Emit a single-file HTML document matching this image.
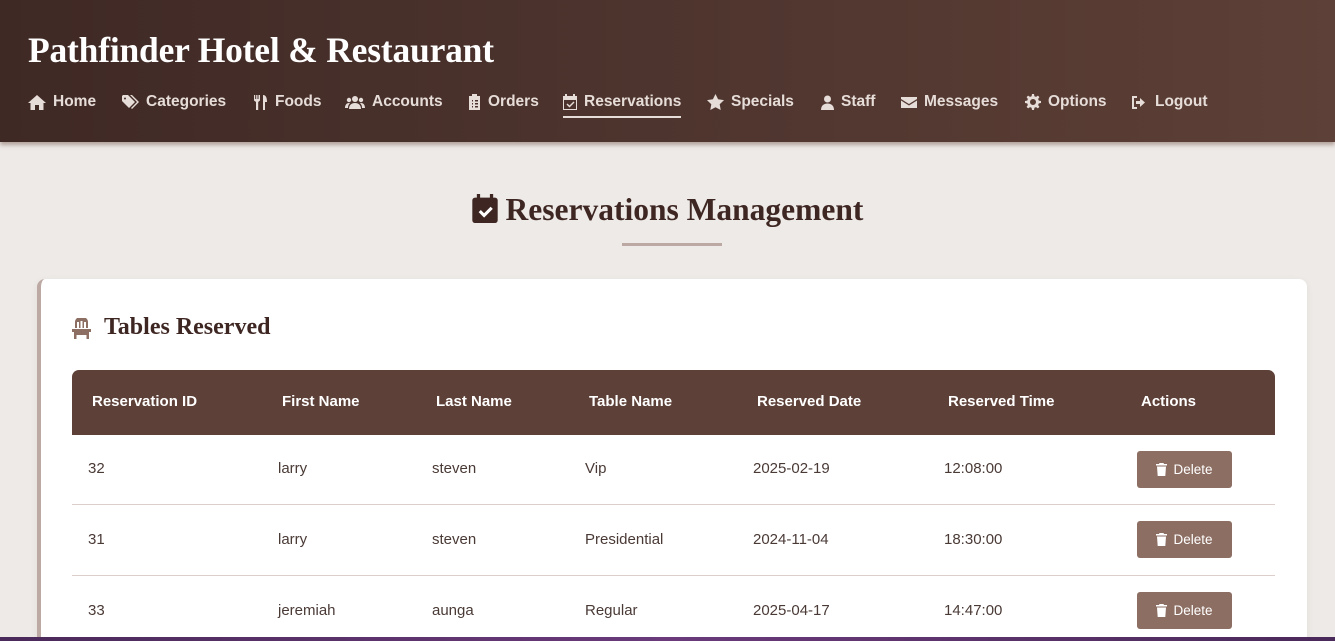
<!DOCTYPE html>
<html><head><meta charset="utf-8"><style>
*{margin:0;padding:0;box-sizing:border-box}
html,body{width:1335px;height:641px;overflow:hidden}
body{background:#eeeae7;font-family:"Liberation Sans",sans-serif;position:relative}
.hdr{position:absolute;left:0;top:0;width:1335px;height:142px;background:linear-gradient(90deg,#3f2925,#5d4037);box-shadow:0 3px 4px rgba(120,90,80,.5)}
.hdr h1{position:absolute;left:28px;top:29px;font-family:"Liberation Serif",serif;font-size:35.5px;color:#fff;font-weight:bold;letter-spacing:-0.2px}
.nav{position:absolute;top:91px;height:22px;color:#e6dcd8;font-size:15.5px;font-weight:bold;display:flex;align-items:center;gap:7px;white-space:nowrap}
.nav svg{fill:#e6dcd8}
.nav.act{border-bottom:2px solid #e6dcd8;height:27px;padding-bottom:4px}
.ttl{position:absolute;left:0;width:1335px;top:192px;text-align:center;font-family:"Liberation Serif",serif;font-weight:bold;font-size:31.5px;color:#3e2723}
.ttl svg{vertical-align:-3px}
.bar{position:absolute;left:622px;top:243px;width:100px;height:3px;background:#bca9a3}
.card{position:absolute;left:37px;top:279px;width:1270px;height:362px;background:#fff;border-radius:8px 8px 0 0;border-left:4px solid #bca9a3;box-shadow:0 2px 8px rgba(0,0,0,.06)}
.ch{position:absolute;left:104px;top:314px;font-family:"Liberation Serif",serif;font-weight:bold;font-size:24px;color:#3e2723}
.th{position:absolute;left:72px;top:370px;width:1203px;height:65px;background:#5d4037;border-radius:7px 7px 0 0}
.c{position:absolute;font-size:15px;white-space:nowrap}
.h{color:#fff;font-weight:bold;top:393px}
.r{color:#4a3a36}
.line{position:absolute;left:72px;width:1203px;height:1px;background:#dccfcb}
.btn{position:absolute;left:1137px;width:95px;height:37px;background:#8d6e63;border-radius:3px;color:#fff;font-size:13.5px;display:flex;align-items:center;justify-content:center;gap:6px}
.btn svg{fill:#fff}
.foot{position:absolute;left:0;top:637px;width:1335px;height:4px;background:linear-gradient(90deg,#4a2a5a,#6a3a7a,#4a2a5a)}
</style></head><body>
<div class="hdr">
<h1>Pathfinder Hotel &amp; Restaurant</h1>
<div class="nav" style="left:28px"><svg width="18" height="15" viewBox="0 0 18 15"><path d="M9 0L0 8h2.5v7h4.5v-5h4v5h4.5V8H18z"/></svg>Home</div>
<div class="nav" style="left:122px"><svg width="17" height="15" viewBox="0 0 17 15"><path d="M0 1v5l7 7 6-6-7-7H1zm3 1.5a1 1 0 110 2 1 1 0 010-2zM8 0l7 7-6 6 1 1 7-7-7-7z"/></svg>Categories</div>
<div class="nav" style="left:254px"><svg width="14" height="15" viewBox="0 0 14 15"><path d="M0 0h1.2v4h1V0h1.3v4h1V0H6v5.5L4.2 7v8H2V7L0 5.5zM9 0c3 0 4 3 4 7h-2v8H9z"/></svg>Foods</div>
<div class="nav" style="left:345px"><svg width="20" height="15" viewBox="0 0 20 15"><circle cx="10" cy="4" r="3"/><circle cx="4" cy="5" r="2.2"/><circle cx="16" cy="5" r="2.2"/><path d="M4 14c0-4 2.5-6 6-6s6 2 6 6zM0 13c0-3 1.5-5 4-5l1 .3C3.5 9.5 3 11 3 13zM20 13c0-3-1.5-5-4-5l-1 .3c1.5 1.2 2 2.7 2 4.7z"/></svg>Accounts</div>
<div class="nav" style="left:468px"><svg width="13" height="16" viewBox="0 0 13 16"><path d="M1 2h3V0h5v2h3v14H1zm3 4v1.5h1V6zm0 3v1.5h1V9zm0 3v1.5h1V12zm3-6v1.5h3V6zm0 3v1.5h3V9zm0 3v1.5h3V12z"/></svg>Orders</div>
<div class="nav act" style="left:563px"><svg width="14" height="16" viewBox="0 0 14 16"><path d="M2 0h2v2h6V0h2v2h2v14H0V2h2zM1 6v9h12V6zm2.5 4.5l1-1 2 2 4-4 1 1-5 5z"/></svg>Reservations</div>
<div class="nav" style="left:707px"><svg width="17" height="16" viewBox="0 0 17 16"><path d="M8.5 0l2.6 5.3 5.9.8-4.3 4.1 1 5.8-5.2-2.8-5.2 2.8 1-5.8L0 6.1l5.9-.8z"/></svg>Specials</div>
<div class="nav" style="left:821px"><svg width="13" height="15" viewBox="0 0 13 15"><circle cx="6.5" cy="4" r="3.5"/><path d="M0 15c0-4 2.5-6.5 6.5-6.5S13 11 13 15z"/></svg>Staff</div>
<div class="nav" style="left:901px"><svg width="16" height="13" viewBox="0 0 16 13"><path d="M0 1h16v2L8 8 0 3zm0 3.5l8 5 8-5V12H0z"/></svg>Messages</div>
<div class="nav" style="left:1025px"><svg width="16" height="16" viewBox="0 0 16 16"><path d="M7 0h2l.4 2.2 1.6.7 1.9-1.3 1.5 1.5-1.3 1.9.7 1.6L16 7v2l-2.2.4-.7 1.6 1.3 1.9-1.5 1.5-1.9-1.3-1.6.7L9 16H7l-.4-2.2-1.6-.7-1.9 1.3-1.5-1.5 1.3-1.9-.7-1.6L0 9V7l2.2-.4.7-1.6-1.3-1.9 1.5-1.5 1.9 1.3 1.6-.7zm1 5a3 3 0 100 6 3 3 0 000-6z"/></svg>Options</div>
<div class="nav" style="left:1131px"><svg width="17" height="15" viewBox="0 0 17 15"><path d="M1 1h5v2H3v9h3v2H1zm8 2l5 4.5L9 12V9H5V6h4z"/></svg>Logout</div>
</div>
<div class="ttl"><svg width="26" height="29" viewBox="0 0 14 16"><rect x="2.5" y="0" width="1.8" height="3" fill="#3e2723"/><rect x="9.7" y="0" width="1.8" height="3" fill="#3e2723"/><rect x="0" y="2" width="14" height="14" rx="1.5" fill="#3e2723"/><path d="M3.5 10l1.2-1.2 1.8 1.8 3.6-3.6 1.2 1.2-4.8 4.8z" fill="#fff"/></svg> Reservations Management</div>
<div class="bar"></div>
<div class="card"></div>
<svg style="position:absolute;left:72px;top:318px" width="19" height="21" viewBox="0 0 19 21" fill="#8d6e63"><path d="M3 10V4a6 5 0 0113 0v6h-2V4H12v6h-1.5V3h-2v7H7V4H5v6zM0 11h19v3h-2v7h-2.5v-4h-10v4H2v-7H0z"/></svg>
<div class="ch">Tables Reserved</div>
<div class="th"></div>
<div class="c h" style="left:92px">Reservation ID</div>
<div class="c h" style="left:282px">First Name</div>
<div class="c h" style="left:436px">Last Name</div>
<div class="c h" style="left:589px">Table Name</div>
<div class="c h" style="left:757px">Reserved Date</div>
<div class="c h" style="left:948px">Reserved Time</div>
<div class="c h" style="left:1141px">Actions</div>

<div class="c r" style="left:88px;top:460px">32</div><div class="c r" style="left:278px;top:460px">larry</div><div class="c r" style="left:432px;top:460px">steven</div><div class="c r" style="left:585px;top:460px">Vip</div><div class="c r" style="left:753px;top:460px">2025-02-19</div><div class="c r" style="left:944px;top:460px">12:08:00</div>
<div class="btn" style="top:451px"><svg width="11" height="13" viewBox="0 0 11 13"><path d="M3.5 0h4l.5 1H11v1.5H0V1h3zM1 3.5h9l-.7 9.5H1.7z"/></svg>Delete</div>
<div class="line" style="top:504px"></div>
<div class="c r" style="left:88px;top:531px">31</div><div class="c r" style="left:278px;top:531px">larry</div><div class="c r" style="left:432px;top:531px">steven</div><div class="c r" style="left:585px;top:531px">Presidential</div><div class="c r" style="left:753px;top:531px">2024-11-04</div><div class="c r" style="left:944px;top:531px">18:30:00</div>
<div class="btn" style="top:521px"><svg width="11" height="13" viewBox="0 0 11 13"><path d="M3.5 0h4l.5 1H11v1.5H0V1h3zM1 3.5h9l-.7 9.5H1.7z"/></svg>Delete</div>
<div class="line" style="top:575px"></div>
<div class="c r" style="left:88px;top:602px">33</div><div class="c r" style="left:278px;top:602px">jeremiah</div><div class="c r" style="left:432px;top:602px">aunga</div><div class="c r" style="left:585px;top:602px">Regular</div><div class="c r" style="left:753px;top:602px">2025-04-17</div><div class="c r" style="left:944px;top:602px">14:47:00</div>
<div class="btn" style="top:592px"><svg width="11" height="13" viewBox="0 0 11 13"><path d="M3.5 0h4l.5 1H11v1.5H0V1h3zM1 3.5h9l-.7 9.5H1.7z"/></svg>Delete</div>
<div class="foot"></div>
</body></html>
